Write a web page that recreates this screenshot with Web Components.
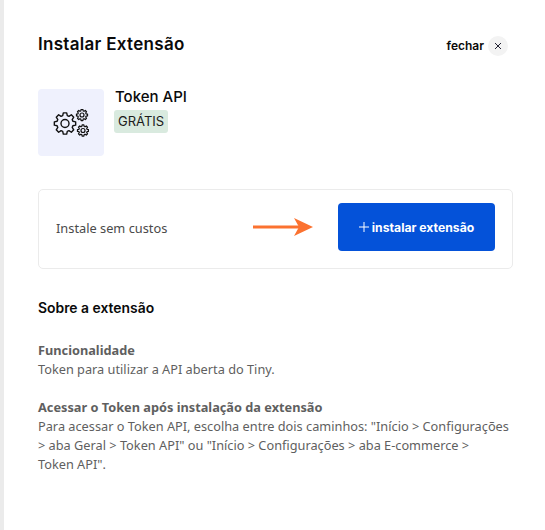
<!DOCTYPE html>
<html lang="pt-BR">
<head>
<meta charset="utf-8">
<title>Instalar Extensão</title>
<style>
  html, body { margin: 0; height: 100%; background: #fff; }
</style>
</head>
<body>
<ext-drawer>
  <ext-header slot="header" title="Instalar Extensão"></ext-header>
  <ext-summary slot="summary" name="Token API" price="GRÁTIS"></ext-summary>
  <ext-install slot="install" note="Instale sem custos" action="instalar extensão"></ext-install>
  <ext-about slot="about" title="Sobre a extensão">
    <ext-block title="Funcionalidade">Token para utilizar a API aberta do Tiny.</ext-block>
    <ext-block title="Acessar o Token após instalação da extensão">Para acessar o Token API, escolha entre dois caminhos: "Início &gt; Configurações &gt; aba Geral &gt; Token API" ou "Início &gt; Configurações &gt; aba E-commerce &gt;<br>Token API".</ext-block>
  </ext-about>
</ext-drawer>

<script>
const HEAD_FONT = '"Inter", "Noto Sans", sans-serif';
const BODY_FONT = '"Noto Sans", "Open Sans", sans-serif';

// cog outline with flat-topped teeth, in svg user units
function gearPath(cx, cy, outer, inner, teeth) {
  const step = Math.PI * 2 / teeth;
  const pts = [];
  for (let i = 0; i < teeth; i++) {
    const a = i * step - Math.PI / 2;
    [[inner, -0.36], [outer, -0.2], [outer, 0.2], [inner, 0.36]].forEach(([r, k]) => {
      pts.push((cx + r * Math.cos(a + k * step)).toFixed(2) + ' ' + (cy + r * Math.sin(a + k * step)).toFixed(2));
    });
  }
  return 'M' + pts.join('L') + 'Z';
}

class ExtDrawer extends HTMLElement {
  constructor() {
    super();
    this.attachShadow({ mode: 'open' }).innerHTML = `
      <style>
        :host { display: block; height: 100%; box-sizing: border-box; border-left: 4px solid #ebebeb; background: #fff; }
        .panel { box-sizing: border-box; width: 509px; padding: 33px 0 0 34px; }
      </style>
      <div class="panel">
        <slot name="header"></slot>
        <slot name="summary"></slot>
        <slot name="install"></slot>
        <slot name="about"></slot>
      </div>`;
  }
}

class ExtHeader extends HTMLElement {
  connectedCallback() {
    this.attachShadow({ mode: 'open' }).innerHTML = `
      <style>
        :host { display: flex; justify-content: space-between; align-items: flex-start; width: 470px; height: 56px; font-family: ${HEAD_FONT}; color: #0a0a0a; }
        h1 { margin: 0; font-size: 17px; line-height: 22px; font-weight: 600; letter-spacing: .3px; }
        .close { display: flex; align-items: center; gap: 4px; margin-top: 3px; font-size: 12px; font-weight: 600; line-height: 20px; }
        .x { width: 20px; height: 20px; border-radius: 50%; background: #f3f3f3; display: grid; place-items: center; }
      </style>
      <h1>${this.getAttribute('title')}</h1>
      <div class="close">fechar
        <span class="x"><svg width="8" height="8" viewBox="0 0 8 8" fill="none" stroke="#223" stroke-width="1"><path d="M1 1l6 6M7 1L1 7"/></svg></span>
      </div>`;
  }
}

class ExtSummary extends HTMLElement {
  connectedCallback() {
    this.attachShadow({ mode: 'open' }).innerHTML = `
      <style>
        :host { display: flex; gap: 10px; height: 100px; font-family: ${HEAD_FONT}; color: #0a0a0a; }
        .icon { width: 66px; height: 67px; border-radius: 4px; background: #eff1fd; display: grid; place-items: center; }
        .title { margin-left: 1px; }
        h2 { margin: 0; font-size: 15px; line-height: 16px; font-weight: 500; }
        .tag { display: block; width: fit-content; margin-top: 5px; padding: 0 4px; height: 23px; line-height: 23px; border-radius: 3px; background: #d9eadf; font-size: 13px; color: #1c1c1c; }
      </style>
      <div class="icon">
        <svg width="36" height="28" viewBox="0 0 36 28" fill="none" stroke="#111" stroke-width="1.4" stroke-linejoin="round">
          <path d="${gearPath(12, 14.5, 10.8, 8.2, 8)}"/><circle cx="12" cy="14.5" r="4"/>
          <g stroke-width="1.2">
            <path d="${gearPath(29, 6, 5.6, 4.2, 8)}"/><circle cx="29" cy="6" r="2"/>
            <path d="${gearPath(30, 21.5, 5.6, 4.2, 8)}"/><circle cx="30" cy="21.5" r="2"/>
          </g>
        </svg>
      </div>
      <div>
        <h2 class="title">${this.getAttribute('name')}</h2>
        <span class="tag">${this.getAttribute('price')}</span>
      </div>`;
  }
}

class ExtInstall extends HTMLElement {
  connectedCallback() {
    this.attachShadow({ mode: 'open' }).innerHTML = `
      <style>
        :host { display: flex; align-items: center; box-sizing: border-box; width: 475px; height: 80px; padding: 0 17px 4px; border: 1px solid #ebebeb; border-radius: 5px; }
        .note { flex: 1; padding-top: 2px; font: 400 12.8px ${BODY_FONT}; color: #4a4a4a; }
        svg.arrow { margin-right: 25px; }
        button { display: flex; align-items: center; justify-content: center; gap: 3px; width: 157px; height: 48px; padding: 0; border: 0; border-radius: 4px; background: #0452d9; color: #fff; font: 700 12.2px ${HEAD_FONT}; }
      </style>
      <span class="note">${this.getAttribute('note')}</span>
      <svg class="arrow" width="60" height="18" viewBox="0 0 60 18"><path d="M0 7.5h47v3H0z" fill="#fb7230"/><path d="M41 0l19 9-19 9 5-9z" fill="#fb7230"/></svg>
      <button><svg width="10" height="10" viewBox="0 0 10 10" stroke="#fff" stroke-width="1"><path d="M5 0v10M0 5h10"/></svg>${this.getAttribute('action')}</button>`;
  }
}

class ExtAbout extends HTMLElement {
  connectedCallback() {
    this.attachShadow({ mode: 'open' }).innerHTML = `
      <style>
        :host { display: block; width: 475px; margin-top: 29px; }
        h3 { margin: 0 0 23px; font: 600 13.9px/20px ${HEAD_FONT}; color: #0a0a0a; }
        .list { display: flex; flex-direction: column; gap: 19px; }
      </style>
      <h3>${this.getAttribute('title')}</h3>
      <div class="list"><slot></slot></div>`;
  }
}

class ExtBlock extends HTMLElement {
  connectedCallback() {
    this.attachShadow({ mode: 'open' }).innerHTML = `
      <style>
        :host { display: block; font: 400 12.75px/19px ${BODY_FONT}; color: #5f5f5f; }
        strong { display: block; font-weight: 700; }
      </style>
      <strong>${this.getAttribute('title')}</strong>
      <slot></slot>`;
  }
}

customElements.define('ext-drawer', ExtDrawer);
customElements.define('ext-header', ExtHeader);
customElements.define('ext-summary', ExtSummary);
customElements.define('ext-install', ExtInstall);
customElements.define('ext-about', ExtAbout);
customElements.define('ext-block', ExtBlock);
</script>
</body>
</html>
